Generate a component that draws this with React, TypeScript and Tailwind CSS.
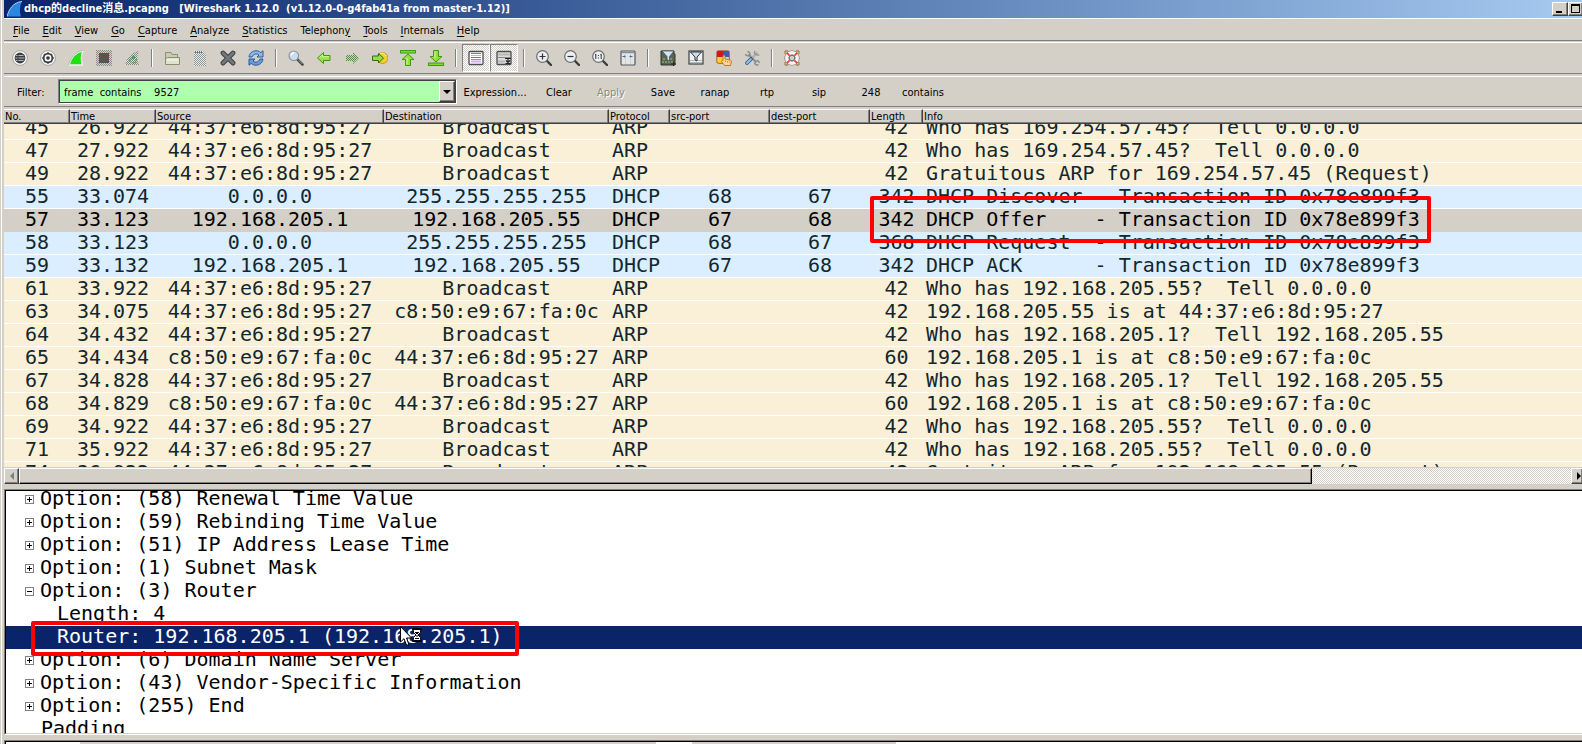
import React, { useState } from 'react';
import clsx from 'clsx';

interface Packet {
  no: string;
  time: string;
  src: string;
  dst: string;
  proto: 'ARP' | 'DHCP';
  srcPort?: string;
  dstPort?: string;
  length: string;
  info: string;
}

interface TreeItem {
  text: string;
  kind: 'closed' | 'open' | 'child' | 'plain';
}

const PC = '44:37:e6:8d:95:27';
const GW = 'c8:50:e9:67:fa:0c';

const arp = (no: string, time: string, src: string, dst: string, length: string, info: string): Packet =>
  ({ no, time, src, dst, proto: 'ARP', length, info });

const dhcp = (no: string, time: string, src: string, dst: string, srcPort: string, dstPort: string, length: string, info: string): Packet =>
  ({ no, time, src, dst, proto: 'DHCP', srcPort, dstPort, length, info });

const packets: Packet[] = [
  arp('45', '26.922', PC, 'Broadcast', '42', 'Who has 169.254.57.45?  Tell 0.0.0.0'),
  arp('47', '27.922', PC, 'Broadcast', '42', 'Who has 169.254.57.45?  Tell 0.0.0.0'),
  arp('49', '28.922', PC, 'Broadcast', '42', 'Gratuitous ARP for 169.254.57.45 (Request)'),
  dhcp('55', '33.074', '0.0.0.0', '255.255.255.255', '68', '67', '342', 'DHCP Discover - Transaction ID 0x78e899f3'),
  dhcp('57', '33.123', '192.168.205.1', '192.168.205.55', '67', '68', '342', 'DHCP Offer    - Transaction ID 0x78e899f3'),
  dhcp('58', '33.123', '0.0.0.0', '255.255.255.255', '68', '67', '368', 'DHCP Request  - Transaction ID 0x78e899f3'),
  dhcp('59', '33.132', '192.168.205.1', '192.168.205.55', '67', '68', '342', 'DHCP ACK      - Transaction ID 0x78e899f3'),
  arp('61', '33.922', PC, 'Broadcast', '42', 'Who has 192.168.205.55?  Tell 0.0.0.0'),
  arp('63', '34.075', PC, GW, '42', '192.168.205.55 is at 44:37:e6:8d:95:27'),
  arp('64', '34.432', PC, 'Broadcast', '42', 'Who has 192.168.205.1?  Tell 192.168.205.55'),
  arp('65', '34.434', GW, PC, '60', '192.168.205.1 is at c8:50:e9:67:fa:0c'),
  arp('67', '34.828', PC, 'Broadcast', '42', 'Who has 192.168.205.1?  Tell 192.168.205.55'),
  arp('68', '34.829', GW, PC, '60', '192.168.205.1 is at c8:50:e9:67:fa:0c'),
  arp('69', '34.922', PC, 'Broadcast', '42', 'Who has 192.168.205.55?  Tell 0.0.0.0'),
  arp('71', '35.922', PC, 'Broadcast', '42', 'Who has 192.168.205.55?  Tell 0.0.0.0'),
  arp('74', '36.922', PC, 'Broadcast', '42', 'Gratuitous ARP for 192.168.205.55 (Request)'),
];

const tree: TreeItem[] = [
  { text: 'Option: (58) Renewal Time Value', kind: 'closed' },
  { text: 'Option: (59) Rebinding Time Value', kind: 'closed' },
  { text: 'Option: (51) IP Address Lease Time', kind: 'closed' },
  { text: 'Option: (1) Subnet Mask', kind: 'closed' },
  { text: 'Option: (3) Router', kind: 'open' },
  { text: 'Length: 4', kind: 'child' },
  { text: 'Router: 192.168.205.1 (192.168.205.1)', kind: 'child' },
  { text: 'Option: (6) Domain Name Server', kind: 'closed' },
  { text: 'Option: (43) Vendor-Specific Information', kind: 'closed' },
  { text: 'Option: (255) End', kind: 'closed' },
  { text: 'Padding', kind: 'plain' },
];

// [before, mnemonic, after]
const menus = [
  ['', 'F', 'ile'], ['', 'E', 'dit'], ['', 'V', 'iew'], ['', 'G', 'o'], ['', 'C', 'apture'], ['', 'A', 'nalyze'],
  ['', 'S', 'tatistics'], ['Telephon', 'y', ''], ['', 'T', 'ools'], ['', 'I', 'nternals'], ['', 'H', 'elp'],
];

const columns: [string, string][] = [
  ['No.', 'w-[66px]'], ['Time', 'w-[86px]'], ['Source', 'w-[228px]'], ['Destination', 'w-[225px]'], ['Protocol', 'w-[61px]'],
  ['src-port', 'w-[100px]'], ['dest-port', 'w-[100px]'], ['Length', 'w-[53px]'], ['Info', ''],
];

const UI_FONT = "font-['DejaVu_Sans_Condensed','Noto_Sans_CJK_SC',sans-serif]";
const MONO_FONT = "font-['DejaVu_Sans_Mono','Noto_Sans_CJK_SC',monospace]";
const DITHER = 'bg-[repeating-conic-gradient(#ffffff_0_25%,#d4d0c8_0_50%)] bg-[length:2px_2px]';
const RAISED = 'border border-t-white border-l-white border-r-[#404040] border-b-[#404040] bg-[#d4d0c8] shadow-[inset_-1px_-1px_0_#808080]';

// --- ICONS ---

const Svg: React.FC<{ children: React.ReactNode }> = ({ children }) => (
  <svg width="16" height="16" viewBox="0 0 16 16" fill="none" aria-hidden="true">{children}</svg>
);

const Dither = ({ id, color }: { id: string; color: string }) => (
  <pattern id={id} width="2" height="2" patternUnits="userSpaceOnUse">
    <rect width="1" height="1" fill={color} />
    <rect x="1" y="1" width="1" height="1" fill={color} />
  </pattern>
);

const Lens = ({ children }: { children?: React.ReactNode }) => (
  <Svg>
    <path d="M10.5 10.5l4.5 4.5" stroke="#3a3d40" strokeWidth="2.4" strokeLinecap="round" />
    <circle cx="6.5" cy="6.5" r="5.8" fill="#eceef0" stroke="#6a6e70" strokeWidth="1.2" />
    {children}
  </Svg>
);

const ARROW_LEFT = 'M1.5 8L7.5 2.5V5.5H14V10.5H7.5V13.5Z';

const icons: Record<string, React.ReactNode> = {
  interfaces: (
    <Svg>
      <circle cx="8" cy="8" r="7.4" fill="#fafafa" stroke="#a0a0a0" />
      <circle cx="8" cy="8" r="5.4" fill="#3c4043" />
      <path d="M6.5 5.5h5M6.5 8h6M6.5 10.5h5M4 5.5h1.5M3.5 8h2M4 10.5h1.5" stroke="#b8b8b8" />
    </Svg>
  ),
  options: (
    <Svg>
      <circle cx="8" cy="8" r="7.4" fill="#fafafa" stroke="#a0a0a0" />
      <circle cx="8" cy="8" r="4.4" stroke="#3c4043" strokeWidth="1.8" />
      <circle cx="8" cy="8" r="1.8" fill="#303336" />
      <path d="M8 2.2v2M8 11.8v2M2.2 8h2M11.8 8h2M4 4l1 1M11 11l1 1M4 12l1-1M11 5l1-1" stroke="#3c4043" strokeWidth="1.4" />
    </Svg>
  ),
  start: (
    <Svg>
      <path d="M1 15C3 8 7 2 15 1 13 5 13 10 14.4 15Z" fill="#1fe010" stroke="#eef0ee" strokeWidth="1.4" />
      <path d="M.4 15.4C2.4 8 7 1.2 15.4.4" stroke="#9fa89f" strokeWidth=".7" />
    </Svg>
  ),
  stop: (
    <Svg>
      <defs><Dither id="dStop" color="#8c8c88" /><Dither id="dStopIn" color="#5c5654" /></defs>
      <rect x="0" y="0" width="16" height="16" fill="url(#dStop)" />
      <rect x="3" y="3" width="10" height="10" fill="#a82c38" />
      <rect x="3" y="3" width="10" height="10" fill="url(#dStopIn)" />
    </Svg>
  ),
  restart: (
    <Svg>
      <defs><Dither id="dRestart" color="#7c887c" /></defs>
      <path d="M1 15C3 8 7 2 15 1 13 5 13 10 15 15Z" fill="#dcdeda" />
      <path d="M1 15C3 8 7 2 15 1 13 5 13 10 15 15Z" fill="url(#dRestart)" />
      <path d="M6 11.5C5.5 9 7.5 7 10 7.5M12 9c.5 2.5-1.5 4.500-4 4M9 5.5l2 2-2.5 1.5" stroke="#2fa03c" strokeWidth="1.2" strokeDasharray="1.5 .7" />
    </Svg>
  ),
  open: (
    <Svg>
      <path d="M1.5 14V2.5h5.5l1 2h5.5V8" fill="#c8cdb0" stroke="#8a9172" />
      <path d="M1.5 14.5V9l2-1.5h12v7Z" fill="#dfe3cb" stroke="#8a9172" />
      <path d="M3 10h11" stroke="#f6f8ea" />
    </Svg>
  ),
  save: (
    <Svg>
      <defs><Dither id="dSave" color="#8d9496" /></defs>
      <path d="M2 1H11L14 4V16H2Z" fill="#ecece8" />
      <path d="M2 1H11L14 4V16H2Z" fill="url(#dSave)" />
      <path d="M3 2H10" stroke="#4a7f9a" strokeDasharray="1 1" strokeWidth="2" />
    </Svg>
  ),
  close: (
    <Svg>
      <path d="M3 3l10 10M13 3L3 13" stroke="#3f4244" strokeWidth="4.8" strokeLinecap="round" />
      <path d="M3 3l10 10M13 3L3 13" stroke="#74787b" strokeWidth="2.8" strokeLinecap="round" />
    </Svg>
  ),
  reload: (
    <Svg>
      <path d="M1 7C1.5 3 4.5.8 8 .8c2 0 3.5.6 4.7 1.8L15 .8V7H9l2-2C9 3.2 5.500 3.5 4 7Z" fill="#8db8e8" stroke="#234f92" strokeWidth=".9" />
      <path d="M15 9c-.5 4-3.5 6.2-7 6.2-2 0-3.5-.6-4.7-1.8L1 15.2V9h6l-2 2c2 1.8 5.5 1.5 7-2Z" fill="#6a9cda" stroke="#234f92" strokeWidth=".9" />
    </Svg>
  ),
  find: (
    <Svg>
      <path d="M9.5 9.5l5 5" stroke="#4a4a4c" strokeWidth="2.6" strokeLinecap="round" />
      <path d="M10.5 10l4 4" stroke="#a8a8ac" strokeWidth=".8" />
      <circle cx="5.8" cy="5.8" r="4.8" fill="#ccdcf0" stroke="#909498" strokeWidth="1.2" />
      <path d="M3 5.5C3.2 4 4.5 3 6 3" stroke="#fff" strokeWidth="1.4" />
    </Svg>
  ),
  back: <Svg><path d={ARROW_LEFT} fill="#9be04a" stroke="#3f9a12" strokeLinejoin="round" /><path d="M3.5 7.8L6.5 5V6.8H13" stroke="#d4f7a4" /></Svg>,
  forward: (
    <Svg>
      <defs><Dither id="dFwd" color="#5c8850" /></defs>
      <path d="M15 8L9 2V5H2V11H9V14Z" fill="#ccd2c2" />
      <path d="M15 8L9 2V5H2V11H9V14Z" fill="url(#dFwd)" />
    </Svg>
  ),
  goto: (
    <Svg>
      <circle cx="10.500" cy="8" r="5.5" fill="#f6cf2c" stroke="#c59a14" />
      <path d="M8 3.5a5 5 0 0 1 6 2.500" stroke="#fdf0a0" />
      <path d="M11.5 8L6.5 3.500V6H.5V10.5H6.500V13Z" fill="#98dc48" stroke="#2f6f12" strokeLinejoin="round" />
    </Svg>
  ),
  first: (
    <Svg>
      <rect x=".5" y=".5" width="15" height="2.5" fill="#7fdc28" stroke="#3f9a12" />
      <path d="M8 4L14 9.5H10.5V15.5H5.5V9.5H2Z" fill="#96e03e" stroke="#3f9a12" strokeLinejoin="round" />
      <path d="M7 8v6.5" stroke="#d4f7a4" />
    </Svg>
  ),
  last: (
    <Svg>
      <rect x=".5" y="13" width="15" height="2.5" fill="#7fdc28" stroke="#3f9a12" />
      <path d="M8 12L14 6.5H10.5V.5H5.5V6.5H2Z" fill="#96e03e" stroke="#3f9a12" strokeLinejoin="round" />
      <path d="M7 1.5v6.5" stroke="#d4f7a4" />
    </Svg>
  ),
  colorize: (
    <Svg>
      <rect x="1" y="1.5" width="14" height="13" rx="1" fill="#fff" stroke="#4a4c4e" strokeWidth="1.3" />
      <path d="M3 3.5h10" stroke="#d8605a" /><path d="M3 5.5h10" stroke="#e0c050" /><path d="M3 7.5h10" stroke="#5878c8" />
      <path d="M3 9.5h10" stroke="#9888d8" /><path d="M3 11.500h10" stroke="#e0a8f0" strokeWidth="2" />
    </Svg>
  ),
  autoscroll: (
    <Svg>
      <rect x="1" y="1.5" width="14" height="13" rx="1" fill="#dcdcdc" stroke="#4a4c4e" strokeWidth="1.3" />
      <path d="M2 4.5h12M2 11.5h7" stroke="#b8b8b8" strokeWidth="2" />
      <path d="M2 7.5h12" stroke="#8a8a8a" />
      <path d="M9 8.5h6M9.5 13.5h5M12 8v4M10 10.5l2 2 2-2" stroke="#222" strokeWidth="1.2" />
    </Svg>
  ),
  zoomIn: <Lens><path d="M3.5 6.5h6M6.5 3.5v6" stroke="#303336" strokeWidth="1.2" /></Lens>,
  zoomOut: <Lens><path d="M3.5 6.5h6" stroke="#303336" strokeWidth="1.2" /></Lens>,
  zoomFit: <Lens><path d="M3.8 4v5M9.2 4v5M3 4.8l.8-.6M8.4 4.8l.8-.6M6.4 5v1M6.4 7.5v1" stroke="#303336" /></Lens>,
  resize: (
    <Svg>
      <rect x="1" y="1" width="14" height="14" rx="1" fill="#e4e6e6" stroke="#54585b" strokeWidth="1.2" />
      <path d="M1.5 2.5h13" stroke="#8a8f92" strokeWidth="1.5" />
      <path d="M5.5 3v11M10.5 3v11" stroke="#d0d4d4" />
      <path d="M2.5 6.500h3M4.500 5.500v2M9.500 6.500h3M10.500 5.500v2" stroke="#3f6ca8" />
    </Svg>
  ),
  captureFilter: (
    <Svg>
      <path d="M1 1h13v3h1v11H1Z" fill="#59684c" stroke="#2c3328" />
      <path d="M2 12h11M3 9h2M10 9h3" stroke="#a8b890" strokeDasharray="2 1" />
      <path d="M2 1h12L9.5 6.500V11L7 9.5v-3Z" fill="#d4e4f4" stroke="#405468" strokeWidth=".8" />
      <path d="M11 14h5M13.5 11.5v4.500" stroke="#222" />
    </Svg>
  ),
  displayFilter: (
    <Svg>
      <rect x="1" y="1" width="14" height="13" fill="#eef0f2" stroke="#3c4043" strokeWidth="1.2" />
      <path d="M2 10.5h12M2 12.5h12" stroke="#b4b8bc" />
      <path d="M2.5 2h11L9 7v4L7 10V7Z" fill="#cfdceb" stroke="#2c3338" />
    </Svg>
  ),
  rules: (
    <Svg>
      <rect x="1" y="1" width="6" height="6" fill="#d01818" /><rect x="7" y="1" width="6" height="6" fill="#2f62b8" />
      <rect x="1" y="7" width="6" height="6" fill="#f6d82c" />
      <rect x=".8" y=".8" width="12.5" height="12.5" rx="1.5" stroke="#b03028" strokeWidth=".8" />
      <path d="M7 5.5c.8-.8 2 0 2 1V9l5 1c1.2.3 1.5 1 1.3 2l-.8 3.5H8.5L5.5 11.5c-.3-1 .8-1.5 1.5-.8Z" fill="#fbd59c" stroke="#b8701c" strokeWidth=".9" />
      <path d="M9.5 10.5v1.5M11.5 11v1.5M13.3 11.5v1" stroke="#b8701c" strokeWidth=".7" />
    </Svg>
  ),
  prefs: (
    <Svg>
      <path d="M4.500 4.500l8 8" stroke="#8a8f92" strokeWidth="2.2" />
      <path d="M1.500 4C2 6.500 6 6.500 6 4 6 2.500 4.500 1.500 3.500 1.500M10.5 12.500c0 2.500 3 3 4 2M12.500 10.500c2 0 3 1.500 2.500 2.500" stroke="#83888c" strokeWidth="1.4" />
      <path d="M13.500 2.500L8 8" stroke="#a8adb0" strokeWidth="2" />
      <path d="M11 .8C9.500 3 11 5.500 15.200 5" stroke="#8a8f92" strokeWidth="1.3" />
      <path d="M7 9L3 13" stroke="#2458a8" strokeWidth="3.8" strokeLinecap="round" />
      <path d="M6.8 9.200L3 13" stroke="#98c0f0" strokeWidth="2" strokeLinecap="round" />
    </Svg>
  ),
  help: (
    <Svg>
      <path d="M1 1h3M12 1h3M1 15h3M12 15h3M1 1v3M15 1v3M1 12v3M15 12v3" stroke="#a88458" strokeWidth="1.3" />
      <circle cx="8" cy="8" r="5.2" stroke="#7a6a68" strokeWidth="4.8" />
      <circle cx="8" cy="8" r="5.2" stroke="#f8f4f2" strokeWidth="3.6" />
      <path d="M3.500 4.700L4.700 3.500M11.300 3.500L12.500 4.700M12.500 11.300L11.300 12.500M4.700 12.500L3.500 11.300" stroke="#f03838" strokeWidth="3.600" />
      <circle cx="8" cy="8" r="2.8" fill="#d4d0c8" stroke="#555" strokeWidth=".8" />
    </Svg>
  ),
};

const toolGroups = [
  ['interfaces', 'options', 'start', 'stop', 'restart'],
  ['open', 'save', 'close', 'reload'],
  ['find', 'back', 'forward', 'goto', 'first', 'last'],
  ['colorize', 'autoscroll'],
  ['zoomIn', 'zoomOut', 'zoomFit', 'resize'],
  ['captureFilter', 'displayFilter', 'rules', 'prefs'],
  ['help'],
];

const BusyCursor = () => (
  <svg className="absolute left-[394px] top-0 z-20" width="24" height="21" viewBox="0 0 24 21" aria-hidden="true">
    <path d="M.5.5V16L4 12.7 6.5 19H9L6.6 12H11.5Z" fill="#fff" stroke="#000" />
    <path d="M12.5 2.500H21.500V4.500H20.500V6.500L18 9l2.500 2.500v2h1v2h-9v-2h1v-2L16 9 13.500 6.500V4.500H12.500Z" fill="#fff" stroke="#000" />
    <path d="M12 3.500h10M12 14.500h10M15 6.500h4M16 7.500h2M17 9v2M15 12.500h4" stroke="#000" />
  </svg>
);

// --- SECTIONS ---

const TitleBar = () => (
  <header className="flex h-[18px] shrink-0 items-center bg-linear-to-r from-[#0a246a] to-[#a6caf0] pl-[3px] text-[11px] font-bold text-white">
    <svg width="15" height="16" viewBox="0 0 15 16" aria-hidden="true">
      <path d="M0 15.5C2 8 6 1.5 15 .5 12.5 5 12.5 11 14 15.5Z" fill="#2a86e0" />
      <path d="M0 15.5C2 8 6 1.5 15 .5" stroke="#a8d4fc" fill="none" />
    </svg>
    <h1 className="ml-[2px] flex-1 truncate whitespace-pre leading-4">dhcp的decline消息.pcapng   [Wireshark 1.12.0  (v1.12.0-0-g4fab41a from master-1.12)]</h1>
    <button aria-label="Minimize" className={clsx('flex h-[14px] w-4 items-end pb-[2px] pl-[3px]', RAISED)}>
      <span className="h-[2px] w-[6px] bg-black" />
    </button>
    <button aria-label="Maximize" className={clsx('flex h-[14px] w-[14px] items-start border-r-0 pl-[2px] pt-px', RAISED)}>
      <span className="h-[9px] w-[9px] border border-t-2 border-black" />
    </button>
  </header>
);

const MenuBar = () => (
  <nav className="flex h-[23px] shrink-0 items-center gap-[13px] border-b border-t border-b-[#808080] border-t-white pl-[9px] pt-[2px]">
    {menus.map(([before, key, after]) => (
      <button key={before + key + after} className="leading-4">
        {before}<span className="underline underline-offset-2">{key}</span>{after}
      </button>
    ))}
  </nav>
);

const Toolbar = () => (
  <div role="toolbar" className="mt-px flex h-8 shrink-0 items-center border-b border-t border-b-[#808080] border-t-white pl-[2px]">
    {toolGroups.map((group, g) => (
      <React.Fragment key={group[0]}>
        {g > 0 && <span className="mx-[5px] h-[18px] w-[2px] border-l border-r border-l-[#808080] border-r-white" />}
        {group.map(name => (
          <button
            key={name}
            aria-label={name}
            className={clsx('flex h-7 w-7 items-center justify-center',
              g === 3 && ['border border-b-white border-l-[#808080] border-r-white border-t-[#808080]', DITHER])}
          >
            {icons[name]}
          </button>
        ))}
      </React.Fragment>
    ))}
  </div>
);

const FilterBar = () => {
  const [filter, setFilter] = useState('frame  contains    9527');

  return (
    <div className="mt-[2px] flex h-[31px] shrink-0 items-center border-b border-t border-b-[#808080] border-t-white">
      <label htmlFor="filter" className="w-[54px] pl-[13px] pt-[3px]">Filter:</label>
      <div className="flex h-[25px] w-[399px] border border-b-white border-l-[#808080] border-r-white border-t-[#808080]">
        <div className="flex flex-1 border border-[#404040] bg-[#afffaf]">
          <input
            id="filter"
            className="min-w-0 flex-1 whitespace-pre bg-transparent pl-1 pt-[3px] outline-none"
            value={filter}
            onChange={e => setFilter(e.target.value)}
          />
          <button aria-label="Filter history" className={clsx('flex w-4 items-center justify-center', RAISED)}>
            <svg width="8" height="4" viewBox="0 0 8 4" aria-hidden="true"><path d="M0 0H8L4 4Z" fill="#000" /></svg>
          </button>
        </div>
      </div>
      <button className="w-[76px] pt-[3px]">Expression...</button>
      {['Clear', 'Apply', 'Save', 'ranap', 'rtp', 'sip', '248', 'contains'].map(name => (
        <button key={name} disabled={name === 'Apply'} className="w-[52px] pt-[3px] disabled:text-[#8c8a84] disabled:[text-shadow:1px_1px_0_#fff]">{name}</button>
      ))}
    </div>
  );
};

const PacketList = () => {
  const [selected, setSelected] = useState('57');

  return (
    <div className="mt-[2px] min-h-0 flex-[358] overflow-hidden bg-white">
      <table className="-mt-[7px] w-full table-fixed border-separate border-spacing-0">
        <thead className="sticky top-0 z-10">
          <tr>
            {columns.map(([name, width]) => (
              <th
                key={name}
                className={clsx('h-[15px] border-b border-t border-b-[#404040] border-t-white bg-[#d4d0c8] p-0 pl-px pt-px text-left font-normal leading-3',
                  name === 'Info' ? 'shadow-[inset_0_-1px_0_#808080]' : 'border-r border-r-[#404040] shadow-[inset_-1px_-1px_0_#808080]', width)}
              >
                {name}
              </th>
            ))}
          </tr>
        </thead>
        <tbody className={clsx('text-xl', MONO_FONT)}>
          {packets.map(p => {
            const active = p.no === selected;
            const color = active
              ? 'border-[#d4d0c8] bg-[#d4d0c8] text-black'
              : clsx('border-white text-[#12272e]', p.proto === 'ARP' ? 'bg-[#faf0d7]' : 'bg-[#daeeff]');
            const cell = clsx('h-[23px] whitespace-pre border-b p-0 align-top leading-5', color);
            return (
              <tr key={p.no} onClick={() => setSelected(p.no)}>
                <td className={clsx(cell, 'text-center')}>{p.no}</td>
                <td className={clsx(cell, 'text-center')}>{p.time}</td>
                <td className={clsx(cell, 'text-center')}>{p.src}</td>
                <td className={clsx(cell, 'text-center')}>{p.dst}</td>
                <td className={clsx(cell, 'pl-[3px]')}>{p.proto}</td>
                <td className={clsx(cell, 'text-center')}>{p.srcPort}</td>
                <td className={clsx(cell, 'text-center')}>{p.dstPort}</td>
                <td className={clsx(cell, 'relative text-center')}>
                  {p.length}
                  {p.no === '57' && <span className="pointer-events-none absolute -top-[13px] left-0 z-10 h-[47px] w-[561px] rounded-xs border-4 border-[#ff0000]" />}
                </td>
                <td className={clsx(cell, 'overflow-hidden pl-[3px]')}>{p.info}</td>
              </tr>
            );
          })}
        </tbody>
      </table>
    </div>
  );
};

const ScrollBar = () => (
  <div className="mt-px flex h-4 shrink-0">
    <button aria-label="Scroll left" className={clsx('flex w-[15px] items-center justify-center', RAISED)}>
      <svg width="4" height="8" viewBox="0 0 4 8" aria-hidden="true"><path d="M4 0V8L0 4Z" fill="#808080" /></svg>
    </button>
    <div className="flex-[1293] border border-b-black border-l-white border-r-black border-t-white shadow-[inset_-1px_-1px_0_#808080]" />
    <div className={clsx('flex-[259]', DITHER)} />
    <button aria-label="Scroll right" className={clsx('flex w-[11px] items-center justify-end border-r-0 pr-px', RAISED)}>
      <svg width="4" height="8" viewBox="0 0 4 8" aria-hidden="true"><path d="M0 0V8L4 4Z" fill="#000" /></svg>
    </button>
  </div>
);

const DetailTree = () => {
  const [selected, setSelected] = useState(6);

  return (
    <div className="mt-[5px] flex min-h-0 flex-[244] border-b border-l border-t border-b-white border-l-[#808080] border-t-[#808080]">
      <div className="flex-1 overflow-hidden border-b border-l border-t border-b-[#d4d0c8] border-l-black border-t-black bg-white">
        <ul className={clsx('-mt-[3px] text-xl', MONO_FONT)}>
          {tree.map((item, i) => (
            <li
              key={item.text}
              onClick={() => setSelected(i)}
              className={clsx('relative flex h-[23px] items-center whitespace-pre',
                i === selected ? 'bg-[#0a246a] text-white' : 'text-black',
                item.kind === 'child' ? 'pl-[51px]' : item.kind === 'plain' ? 'pl-[35px]' : 'pl-[19px]')}
            >
              {(item.kind === 'closed' || item.kind === 'open') && (
                <svg className="mr-[6px] shrink-0" width="9" height="9" viewBox="0 0 9 9" aria-hidden="true">
                  <rect x=".5" y=".5" width="8" height="8" fill="#fff" stroke="#808080" />
                  <path d={item.kind === 'open' ? 'M2 4.5H7' : 'M2 4.5H7M4.5 2V7'} stroke="#000" />
                </svg>
              )}
              <span className="self-start leading-[21px]">{item.text}</span>
              {i === 6 && (
                <>
                  <span className="pointer-events-none absolute -top-[5px] left-[25px] z-10 h-[35px] w-[488px] rounded-xs border-4 border-[#ff0000]" />
                  <BusyCursor />
                </>
              )}
            </li>
          ))}
        </ul>
      </div>
    </div>
  );
};

// Top edge of the hex pane, mostly below the fold
const BytesPane = () => (
  <div className="mt-[5px] shrink-0 border-l border-t border-[#808080]">
    <div className="flex h-[3px] border-l border-t border-black bg-white">
      <span className="ml-[74px] w-[576px] bg-[#d4d0c8]" />
      <span className="ml-9 w-[204px] bg-[#d4d0c8]" />
    </div>
  </div>
);

export default function App() {
  return (
    <div className={clsx('flex h-screen overflow-hidden bg-[#d4d0c8] text-[11px] text-black', UI_FONT)}>
      <div className="ml-px mr-[2px] w-px shrink-0 bg-white" />
      <main className="flex min-w-0 flex-1 flex-col">
        <TitleBar />
        <MenuBar />
        <Toolbar />
        <FilterBar />
        <PacketList />
        <ScrollBar />
        <DetailTree />
        <BytesPane />
      </main>
    </div>
  );
}
